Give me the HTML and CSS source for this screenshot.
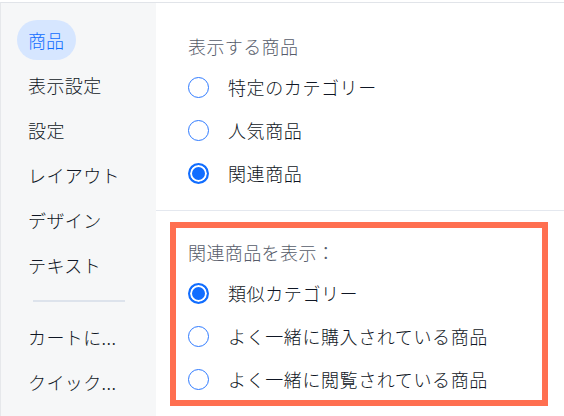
FILE: index.html
```html
<!DOCTYPE html>
<html lang="ja">
<head>
<meta charset="utf-8">
<link rel="stylesheet" href="styles.css">
</head>
<body>
<div class="frame">
  <nav class="sidebar">
    <div class="nav-item active">商品</div>
    <div class="nav-item">表示設定</div>
    <div class="nav-item">設定</div>
    <div class="nav-item">レイアウト</div>
    <div class="nav-item">デザイン</div>
    <div class="nav-item">テキスト</div>
    <div class="nav-divider"></div>
    <div class="nav-item">カートに...</div>
    <div class="nav-item">クイック...</div>
  </nav>
  <main class="main">
    <section class="section">
      <div class="heading">表示する商品</div>
      <div class="option"><span class="radio"></span><span class="label">特定のカテゴリー</span></div>
      <div class="option"><span class="radio"></span><span class="label">人気商品</span></div>
      <div class="option"><span class="radio checked"></span><span class="label">関連商品</span></div>
    </section>
    <div class="divider"></div>
    <section class="highlight">
      <div class="heading">関連商品を表示：</div>
      <div class="option"><span class="radio checked"></span><span class="label">類似カテゴリー</span></div>
      <div class="option"><span class="radio"></span><span class="label">よく一緒に購入されている商品</span></div>
      <div class="option"><span class="radio"></span><span class="label">よく一緒に閲覧されている商品</span></div>
    </section>
  </main>
</div>
</body>
</html>
```

FILE: styles.css
```css
html, body {
  margin: 0;
  padding: 0;
  background: #ffffff;
}
body {
  width: 564px;
  height: 416px;
  overflow: hidden;
  font-family: "Noto Sans CJK JP", "Noto Sans", sans-serif;
  font-size: 18px;
  font-weight: 300;
  color: #0f1624;
}
.frame {
  margin-top: 2px;
  border-top: 1px solid #e1e4e9;
  border-left: 1px solid #e6e8eb;
  display: flex;
  height: 413px;
}
.sidebar {
  width: 155px;
  flex: none;
  background: #f6f7f8;
  padding-top: 17px;
  display: flex;
  flex-direction: column;
  gap: 5px;
  box-sizing: border-box;
}
.nav-item {
  align-self: flex-start;
  margin-left: 16px;
  height: 40px;
  line-height: 40px;
  padding: 0 11px;
  border-radius: 20px;
  white-space: nowrap;
  letter-spacing: 0.4px;
  color: #0f1624;
}
.nav-item.active {
  background: #d6e6ff;
  color: #116dff;
  padding: 0 12px 0 11px;
  letter-spacing: 0;
}
.nav-divider {
  margin: 10px 0 10px 32px;
  width: 92px;
  height: 2px;
  background: #dde3ec;
}
.main {
  flex: 1;
  background: #ffffff;
}
.section {
  padding: 31px 0 15.5px 32px;
}
.heading {
  line-height: 24px;
  color: #565c6a;
  letter-spacing: 0.4px;
  margin-bottom: 7.5px;
}
.option {
  height: 43px;
  display: flex;
  align-items: center;
  gap: 19px;
}
.radio {
  width: 21px;
  height: 21px;
  box-sizing: border-box;
  border: 1px solid #2f7bff;
  border-radius: 50%;
  background: #fff;
  flex: none;
}
.radio.checked {
  border: 2px solid #116dff;
  background: #116dff;
  box-shadow: inset 0 0 0 2px #fff;
}
.label {
  line-height: 24px;
  white-space: nowrap;
  letter-spacing: 0.6px;
}
.divider {
  height: 1px;
  background: #e4e8ef;
}
.highlight {
  margin: 11px 16px 0 14px;
  border: 6px solid #ff6f50;
  padding: 12px 0 0 12px;
  height: 184px;
  box-sizing: border-box;
}
```
